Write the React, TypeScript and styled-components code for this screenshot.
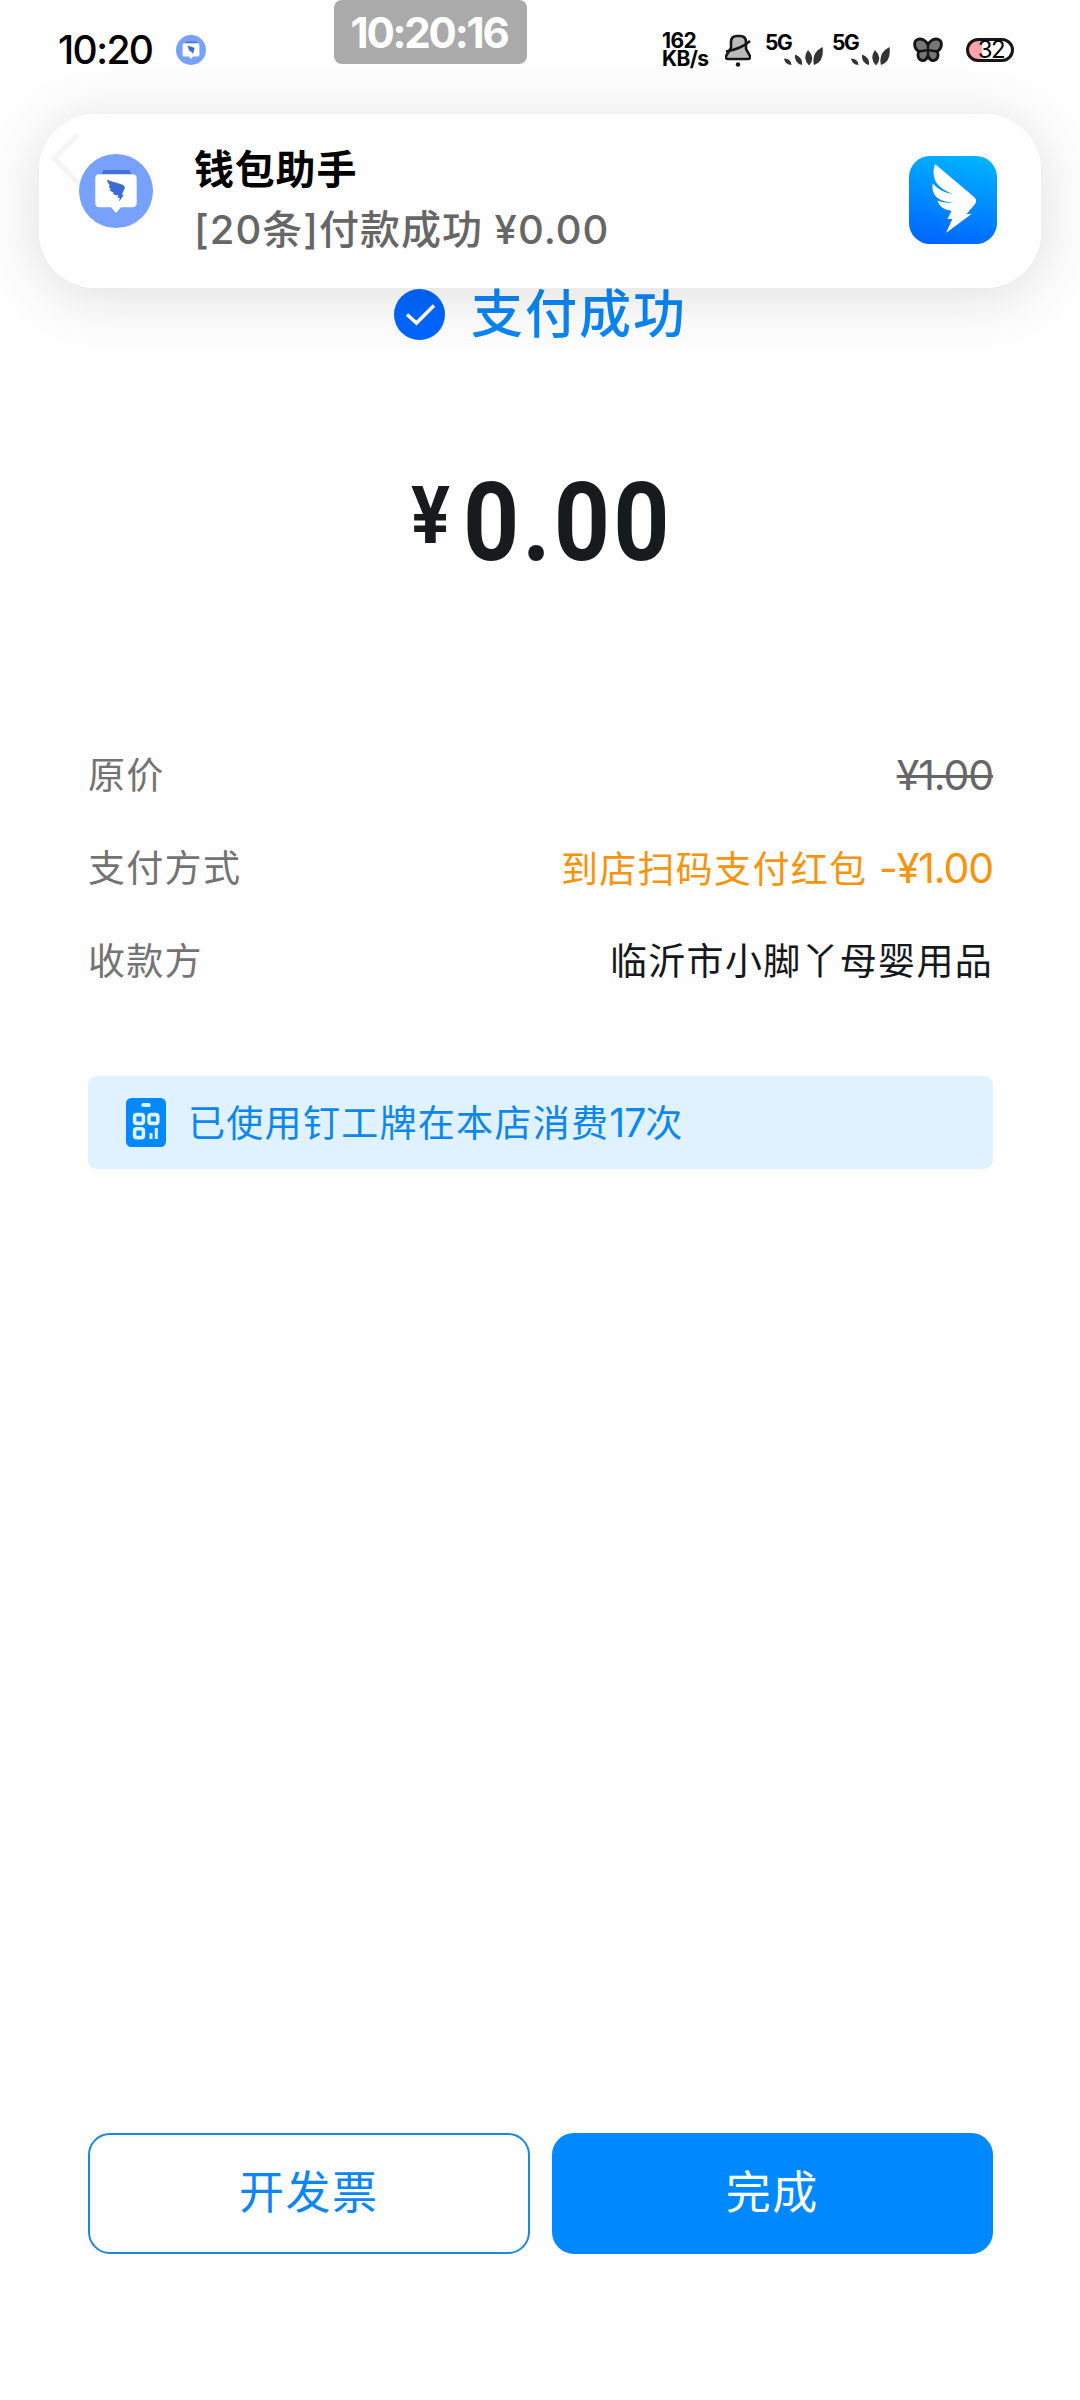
import React from "react";
import styled, { createGlobalStyle } from "styled-components";

const GlobalStyle = createGlobalStyle`
  * { box-sizing: border-box; }
  body { margin: 0; background: #fefefe; font-family: Inter, "Noto Sans CJK SC", sans-serif; }
`;

const Page = styled.div`
  position: relative;
  width: 1080px;
  height: 2400px;
  display: flex;
  flex-direction: column;
  background: #fefefe;
  overflow: hidden;
`;

const StatusBar = styled.header`
  height: 100px;
  padding: 0 66px 0 58px;
  display: flex;
  align-items: center;
  flex: none;
  color: #000;
`;

const Clock = styled.span`
  width: 118px;
  font-size: 39px;
  font-weight: 500;
  letter-spacing: -1.6px;
  line-height: 60px;
  white-space: nowrap;
`;

const StatusIcons = styled.div`
  margin-left: auto;
  display: flex;
  align-items: center;
`;

const NetSpeed = styled.div`
  width: 63px;
  font: 700 21px/18px Inter, sans-serif;
  letter-spacing: -0.6px;
  white-space: pre-line;
`;

const SignalGroup = styled.div`
  width: 67px;
  height: 32px;
  display: flex;
  align-items: flex-end;
`;

const SignalLabel = styled.span`
  width: 18px;
  align-self: flex-start;
  font: 700 21px/17px Inter, sans-serif;
  letter-spacing: -1.4px;
  white-space: nowrap;
`;

const Bell = styled.svg`
  width: 26px;
  height: 33px;
  margin-right: 14px;
`;

const Butterfly = styled.svg`
  width: 30px;
  height: 26px;
  margin: 0 23px 0 14px;
`;

const Battery = styled.div`
  width: 48px;
  height: 24px;
  border: 3px solid #161616;
  border-radius: 12px;
  background: linear-gradient(90deg, #ffa3aa 32%, #fff 32%);
  display: flex;
  align-items: center;
  justify-content: center;
  font: 400 24px/20px Inter, sans-serif;
  letter-spacing: -1.6px;
  padding-left: 2px;
`;

const TimerBadge = styled.div`
  position: absolute;
  left: 334px;
  top: 0;
  width: 193px;
  height: 64px;
  border-radius: 8px;
  background: #aaa;
  color: #fff;
  display: flex;
  justify-content: center;
  padding-right: 3px;
  font-size: 42px;
  font-weight: 700;
  line-height: 65px;
  letter-spacing: -2.2px;
`;

const NavBar = styled.nav`
  height: 120px;
  padding: 31px 0 0 50px;
  flex: none;
`;

const Notification = styled.section`
  position: absolute;
  left: 39px;
  top: 114px;
  width: 1002px;
  height: 174px;
  padding: 0 44px 2px 40px;
  display: flex;
  align-items: center;
  border-radius: 56px;
  background: rgba(254, 254, 254, 0.96);
  box-shadow: 0 8px 60px rgba(0, 0, 0, 0.13);
`;

const Avatar = styled.div`
  display: flex;
  margin-bottom: 18px;
`;

const NotificationText = styled.div`
  flex: 1;
  margin-left: 41px;
  display: flex;
  flex-direction: column;
`;

const NotificationTitle = styled.strong`
  font-size: 40px;
  line-height: 60px;
  font-weight: 700;
  letter-spacing: 0.8px;
  color: #000;
`;

const NotificationBody = styled.span`
  font-size: 40px;
  line-height: 60px;
  font-weight: 500;
  color: #666;
  letter-spacing: 1px;
  white-space: nowrap;
`;

const Result = styled.div`
  height: 190px;
  padding: 56px 0 0 394px;
  display: flex;
  align-items: flex-start;
  gap: 26px;
  flex: none;
`;

const ResultIcon = styled.svg`
  width: 51px;
  height: 51px;
  margin-top: 13px;
`;

const ResultText = styled.h1`
  margin: 0;
  font-size: 52px;
  line-height: 78px;
  font-weight: 500;
  letter-spacing: 2px;
  color: #0a86f5;
`;

const Amount = styled.div`
  height: 200px;
  margin-top: 53px;
  display: flex;
  padding-left: 411px;
  color: #181b1e;
  font-family: Roboto, sans-serif;
  font-weight: 700;
  flex: none;
`;

const Currency = styled.span`
  width: 52px;
  font-size: 80px;
  line-height: 107px;
  transform: scaleX(0.91);
  transform-origin: 0 0;
`;

const AmountValue = styled.span`
  font-size: 109px;
  line-height: 120px;
  letter-spacing: 3.4px;
  transform: scaleX(0.9);
  transform-origin: 0 0;
`;

const Details = styled.dl`
  margin: 66px 88px 0;
  display: flex;
  flex-direction: column;
`;

const Row = styled.div`
  height: 93.3px;
  display: flex;
  justify-content: space-between;
  align-items: center;
  font-size: 37px;
  letter-spacing: 1.3px;
  line-height: 54px;
`;

const Label = styled.dt`
  color: #737373;
`;

const Value = styled.dd<{ $color?: string }>`
  margin: 0 -1px 0 0;
  color: ${(p) => p.$color ?? "#15181a"};
`;

const Price = styled.span<{ $struck?: boolean }>`
  font-size: 41px;
  letter-spacing: -1.1px;
  text-decoration: ${(p) => (p.$struck ? "line-through" : "none")};
  text-decoration-thickness: 3px;
`;

const UsageNotice = styled.div`
  margin: 67px 87px 0 88px;
  height: 93px;
  flex: none;
  display: flex;
  align-items: center;
  gap: 22px;
  padding-left: 38px;
  border-radius: 9px;
  background: #e0f1ff;
  color: #0d86ef;
  font-size: 37px;
  letter-spacing: 1.3px;
`;

const UsageText = styled.span`
  padding-bottom: 3px;
`;

const UsageCount = styled.span`
  font-size: 39px;
  letter-spacing: -1px;
`;

const Actions = styled.footer`
  margin: auto 87px 146px 88px;
  display: flex;
  gap: 22px;
`;

const ActionButton = styled.button<{ $primary?: boolean }>`
  flex: 1;
  height: 121px;
  padding: 0 0 7px;
  border: 2px solid ${(p) => (p.$primary ? "#0089ff" : "#1a87e6")};
  border-radius: 22px;
  background: ${(p) => (p.$primary ? "#0089ff" : "#fefefe")};
  color: ${(p) => (p.$primary ? "#fff" : "#0a86f5")};
  font: 400 45px/64px "Noto Sans CJK SC", sans-serif;
  letter-spacing: 1.5px;
`;

function AssistantIcon({ size }: { size: number }) {
  return (
    <svg width={size} height={size} viewBox="0 0 74 74">
      <circle cx="37" cy="37" r="37" fill="#77a1fd" />
      <path d="M24.500 16h26l2.500 6H21.500z" fill="#4571d6" />
      <path d="M20.500 20.300h33q4.200 0 4.200 4.200v24.600q0 4.200-4.200 4.200H42L37 59l-5-5.700H20.500q-4.200 0-4.200-4.200V24.500q0-4.200 4.200-4.200z" fill="#fff" />
      <path d="M28 25.700c4 2 11 3 15.500 5 2 1 2.800 2 2 4L43 40.500l1.700.5L40 47.700l.8-3.900h-2.300l1-2.500c-3 0-5.200-1-6-2.600l2 .1c-3-.8-4.700-2-5-3.800l2 .3c-2-1-2.900-2.300-2.700-3.800l1.600.4c-2-1.700-3-4-3.400-6.200z" fill="#3d6bd2" />
    </svg>
  );
}

function DingTalkIcon() {
  return (
    <svg width="88" height="88" viewBox="0 0 88 88">
      <defs>
        <linearGradient id="sky" x1="0.6" y1="0" x2="0.4" y2="1">
          <stop offset="0" stopColor="#00b2ff" />
          <stop offset="1" stopColor="#0066ff" />
        </linearGradient>
      </defs>
      <rect width="88" height="88" rx="21" fill="url(#sky)" />
      <path
        d="M26 8.600c1-.2 1.700.7 3 2L64.500 40.500c3.200 2.700 3.200 4.700 1.600 7.500L57.500 58l5.300-.3L37 77l6.300-14h-4.800l4-8.300c-7-.6-12.500-4-14-10.200 4.500 2 9 2.500 16 2.100-7-.5-12-1.600-15.500-4.300-4.500-3.500-6.200-8.500-5.300-14.800 5.500 6 11.500 9 20.600 10.700-8-2.800-14-6.800-17.300-12.200C24.300 21 23.700 13 26 8.600z"
        fill="#fff"
      />
    </svg>
  );
}

function BadgeIcon() {
  return (
    <svg width="40" height="49" viewBox="0 0 40 49">
      <rect width="40" height="49" rx="5.500" fill="#0089ff" />
      <rect x="15.500" y="5" width="9" height="4" rx="1.500" fill="#e0f1ff" />
      <g fill="none" stroke="#e0f1ff" strokeWidth="3.600">
        <rect x="8.600" y="16.600" width="8.800" height="8.800" rx="2.200" />
        <rect x="23" y="16.600" width="8.800" height="8.800" rx="2.200" />
        <rect x="8.600" y="30.800" width="8.800" height="8.800" rx="2.200" />
        <path d="M25 35v6M30.300 30v11" strokeWidth="3" />
      </g>
    </svg>
  );
}

function LeafSignal() {
  return (
    <svg width="41" height="19" viewBox="0 0 41 19" fill="#333">
      <path d="M1 11.500q7 0 7.500 6.500Q2 18 1 11.500z" />
      <path d="M12 7.500q8 3 7 10.500-8-2-7-10.500z" />
      <path d="M25 3q8 8 1 15.500-7-7.500-1-15.500z" />
      <path d="M39.500 0q2 15-8.500 18Q28 6 39.500 0z" />
    </svg>
  );
}

function Signal() {
  return (
    <SignalGroup>
      <SignalLabel>5G</SignalLabel>
      <LeafSignal />
    </SignalGroup>
  );
}

export default function App() {
  return (
    <Page>
      <GlobalStyle />
      <StatusBar>
        <Clock>10:20</Clock>
        <AssistantIcon size={30} />
        <StatusIcons>
          <NetSpeed>{"162\nKB/s"}</NetSpeed>
          <Bell viewBox="0 0 26 33">
            <path d="M6 8q0-6 6-6h3q6 0 6 6v7l4 7q.5 3-2 3H3q-2.500 0-2-3l5-8z" fill="#bbb" stroke="#161616" strokeWidth="2.600" />
            <path d="M1 17.500Q16 15 25 7" fill="none" stroke="#161616" strokeWidth="2.600" />
            <circle cx="13" cy="30.500" r="2.200" fill="#161616" />
          </Bell>
          <Signal />
          <Signal />
          <Butterfly viewBox="0 0 30 26">
            <path
              d="M15 8C13 3 8 1 4.500 2.500 0 4.500 1 12 6 14.500c-2 3-1 8 3 9 3 .5 5-2 6-5 1 3 3 5.500 6 5 4-1 5-6 3-9C29 12 30 4.500 25.500 2.500 22 1 17 3 15 8z"
              fill="#777"
              stroke="#161616"
              strokeWidth="2.800"
            />
            <path d="M15 8v10M6 14.500l9-1.500 9 1.500" fill="none" stroke="#161616" strokeWidth="2.400" />
          </Butterfly>
          <Battery>32</Battery>
        </StatusIcons>
      </StatusBar>

      <NavBar>
        <svg width="30" height="58" viewBox="0 0 30 58">
          <path d="M28 4L4 27l26 27" fill="none" stroke="#15181a" strokeWidth="5" />
        </svg>
      </NavBar>

      <Result>
        <ResultIcon viewBox="0 0 51 51">
          <circle cx="25.500" cy="25.500" r="25.500" fill="#0066ff" />
          <path d="M13 25.500l9.500 8.500L40 16.500" fill="none" stroke="#fff" strokeWidth="3.600" />
        </ResultIcon>
        <ResultText>支付成功</ResultText>
      </Result>

      <Amount>
        <Currency>¥</Currency>
        <AmountValue>0.00</AmountValue>
      </Amount>

      <Details>
        <Row>
          <Label>原价</Label>
          <Value $color="#666"><Price $struck>¥1.00</Price></Value>
        </Row>
        <Row>
          <Label>支付方式</Label>
          <Value $color="#f7930c">到店扫码支付红包 <Price>-¥1.00</Price></Value>
        </Row>
        <Row>
          <Label>收款方</Label>
          <Value>临沂市小脚丫母婴用品</Value>
        </Row>
      </Details>

      <UsageNotice>
        <BadgeIcon />
        <UsageText>已使用钉工牌在本店消费<UsageCount>17</UsageCount>次</UsageText>
      </UsageNotice>

      <Actions>
        <ActionButton>开发票</ActionButton>
        <ActionButton $primary>完成</ActionButton>
      </Actions>

      <TimerBadge>10:20:16</TimerBadge>
      <Notification>
        <Avatar>
          <AssistantIcon size={74} />
        </Avatar>
        <NotificationText>
          <NotificationTitle>钱包助手</NotificationTitle>
          <NotificationBody>[20条]付款成功 ¥0.00</NotificationBody>
        </NotificationText>
        <DingTalkIcon />
      </Notification>
    </Page>
  );
}
